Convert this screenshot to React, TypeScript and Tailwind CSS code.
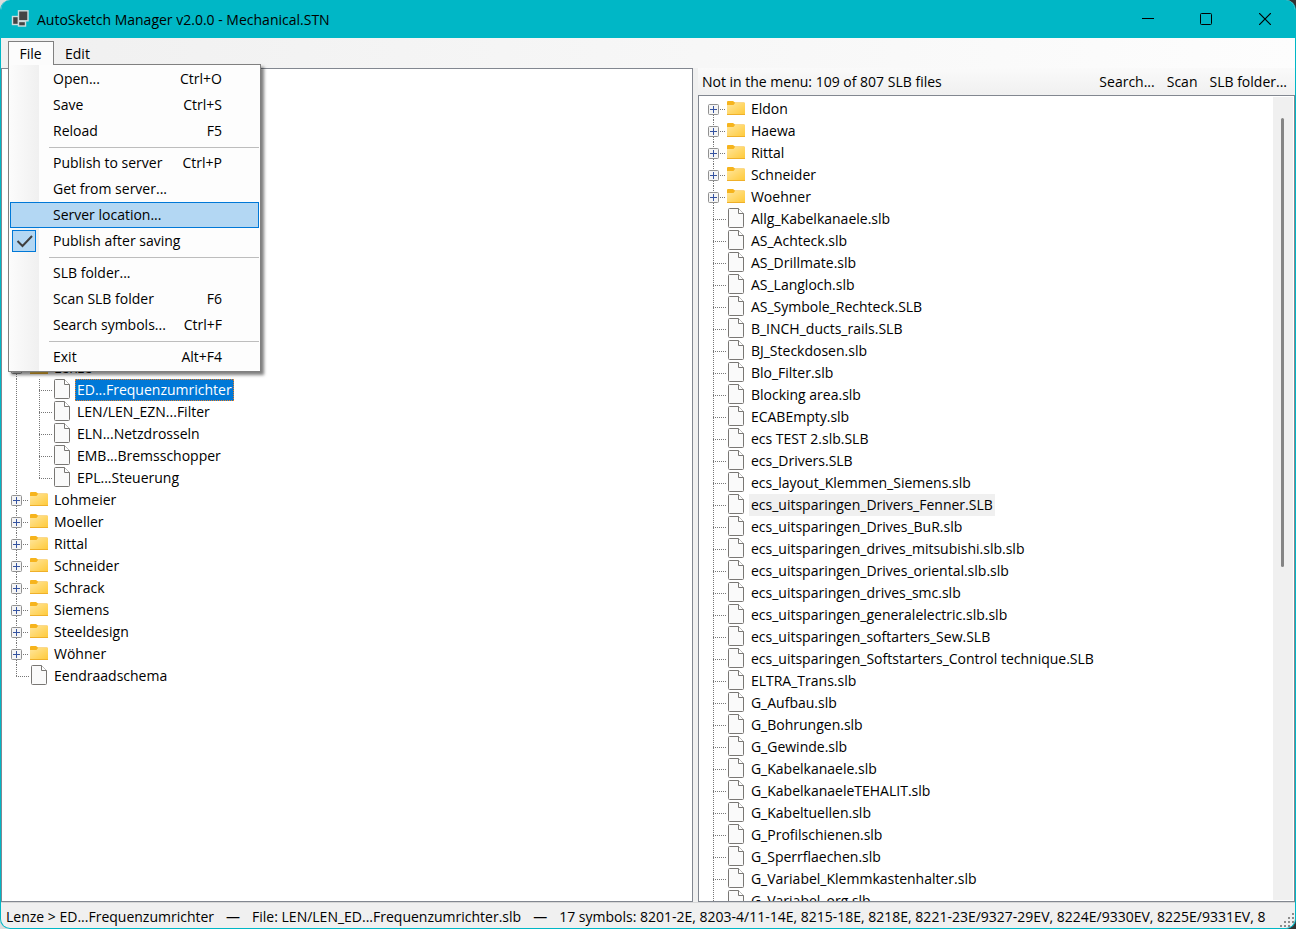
import { useState } from "react";

const slbFolders = ["Eldon", "Haewa", "Rittal", "Schneider", "Woehner"];

const slbFiles = [
  "Allg_Kabelkanaele.slb",
  "AS_Achteck.slb",
  "AS_Drillmate.slb",
  "AS_Langloch.slb",
  "AS_Symbole_Rechteck.SLB",
  "B_INCH_ducts_rails.SLB",
  "BJ_Steckdosen.slb",
  "Blo_Filter.slb",
  "Blocking area.slb",
  "ECABEmpty.slb",
  "ecs TEST 2.slb.SLB",
  "ecs_Drivers.SLB",
  "ecs_layout_Klemmen_Siemens.slb",
  "ecs_uitsparingen_Drivers_Fenner.SLB",
  "ecs_uitsparingen_Drives_BuR.slb",
  "ecs_uitsparingen_drives_mitsubishi.slb.slb",
  "ecs_uitsparingen_Drives_oriental.slb.slb",
  "ecs_uitsparingen_drives_smc.slb",
  "ecs_uitsparingen_generalelectric.slb.slb",
  "ecs_uitsparingen_softarters_Sew.SLB",
  "ecs_uitsparingen_Softstarters_Control technique.SLB",
  "ELTRA_Trans.slb",
  "G_Aufbau.slb",
  "G_Bohrungen.slb",
  "G_Gewinde.slb",
  "G_Kabelkanaele.slb",
  "G_KabelkanaeleTEHALIT.slb",
  "G_Kabeltuellen.slb",
  "G_Profilschienen.slb",
  "G_Sperrflaechen.slb",
  "G_Variabel_Klemmkastenhalter.slb",
  "G_Variabel_org.slb",
];

const lenzeFiles = [
  "ED...Frequenzumrichter",
  "LEN/LEN_EZN...Filter",
  "ELN...Netzdrosseln",
  "EMB...Bremsschopper",
  "EPL...Steuerung",
];

const menuFolders = [
  "Lohmeier",
  "Moeller",
  "Rittal",
  "Schneider",
  "Schrack",
  "Siemens",
  "Steeldesign",
  "Wöhner",
];

type MenuEntry = { label: string; keys?: string };

const fileMenu: MenuEntry[][] = [
  [
    { label: "Open...", keys: "Ctrl+O" },
    { label: "Save", keys: "Ctrl+S" },
    { label: "Reload", keys: "F5" },
  ],
  [
    { label: "Publish to server", keys: "Ctrl+P" },
    { label: "Get from server..." },
    { label: "Server location..." },
    { label: "Publish after saving" },
  ],
  [
    { label: "SLB folder..." },
    { label: "Scan SLB folder", keys: "F6" },
    { label: "Search symbols...", keys: "Ctrl+F" },
  ],
  [{ label: "Exit", keys: "Alt+F4" }],
];

function AppIcon() {
  return (
    <svg width="18" height="18" viewBox="0 0 18 18" className="shrink-0">
      <g fill="#444" stroke="#d0dcdd" strokeWidth="1.4">
        <rect x="1.5" y="6.5" width="6" height="8" />
        <rect x="7.5" y="11.5" width="7" height="4.5" />
        <rect x="7.5" y="0.8" width="9.5" height="10" />
      </g>
    </svg>
  );
}

function FolderIcon() {
  return (
    <svg width="18" height="16" viewBox="0 0 18 16" className="shrink-0">
      <defs>
        <linearGradient id="folder" x1="0" y1="0" x2="1" y2="1">
          <stop offset="0" stopColor="#ffe69c" />
          <stop offset="1" stopColor="#ffc937" />
        </linearGradient>
      </defs>
      <path d="M0 1Q0 0 1 0H6L8 1.5H17Q18 1.5 18 2.5V5H0Z" fill="#f6b41d" />
      <path d="M0 4H6.5L8 2H18V14H0Z" fill="url(#folder)" />
      <path d="M0 13.5H18" stroke="#efb02a" />
    </svg>
  );
}

function FileIcon() {
  return (
    <svg width="16" height="22" viewBox="0 0 16 22" className="shrink-0">
      <path
        d="M0.5 1.5Q0.5 0.5 1.5 0.5H10.5L15.5 5.5V18.5Q15.5 19.5 14.5 19.5H1.5Q0.5 19.5 0.5 18.5Z"
        fill="#fafafa"
        stroke="#797774"
      />
      <path d="M10.5 0.5V5.5H15.5" fill="#fff" stroke="#797774" />
    </svg>
  );
}

function Expander({ open }: { open?: boolean }) {
  return (
    <svg width="11" height="11" viewBox="0 0 11 11" className="shrink-0">
      <rect x="0.5" y="0.5" width="10" height="10" rx="1" fill="#f5f5f5" stroke="#919191" />
      <path d={open ? "M2 5.5H9" : "M2 5.5H9M5.5 2V9"} stroke="#3553a0" />
    </svg>
  );
}

// Dotted guide lines in front of a row; "last" stops the vertical one half way.
function Branch({ last }: { last?: boolean }) {
  return (
    <svg width="13" height="22" className="shrink-0">
      <path d={last ? "M0.5 0V12" : "M0.5 0V22"} stroke="#777" strokeDasharray="1 1" />
      <path d="M0 11.5H13" stroke="#777" strokeDasharray="1 1" />
    </svg>
  );
}

function FolderRow({ name, open, first }: { name: string; open?: boolean; first?: boolean }) {
  return (
    <li className="flex h-[22px] items-center pl-[9px]">
      <button
        aria-label={`Expand ${name}`}
        className="flex h-[22px] w-[11px] flex-col items-center"
      >
        <svg width="1" height="6" className="shrink-0">
          {!first && <path d="M0.5 0V6" stroke="#777" strokeDasharray="1 1" />}
        </svg>
        <Expander open={open} />
        <svg width="1" height="5" className="shrink-0">
          <path d="M0.5 0V5" stroke="#777" strokeDasharray="1 1" />
        </svg>
      </button>
      <svg width="8" height="22" className="shrink-0">
        <path d="M1 11.5H6" stroke="#777" strokeDasharray="1 1" />
      </svg>
      <FolderIcon />
      <span className="ml-1 px-[2px]">{name}</span>
    </li>
  );
}

function FileRow({ name, last, mark }: { name: string; last?: boolean; mark?: string }) {
  return (
    <li className="flex h-[22px] items-center pl-[14px]">
      <Branch last={last} />
      <span className="ml-[2px] flex">
        <FileIcon />
      </span>
      <span className={`ml-[5px] px-[2px] leading-[22px] ${mark ?? ""}`}>{name}</span>
    </li>
  );
}

function FileMenu() {
  const [publish, setPublish] = useState(true);

  return (
    <div className="absolute top-full left-0 z-10 -mt-px w-[253px] border border-[#808080] bg-[linear-gradient(to_right,#fcfcfc,#f0f0f0_30px,#fdfdfd_30px)] py-px shadow-[3px_3px_3px_rgba(0,0,0,0.5)]">
      {fileMenu.map((group, i) => (
        <div key={i}>
          {i > 0 && <hr className="mt-[3px] mr-px mb-px ml-10 h-[2px] border-0 border-t border-[#bdbdbd]" />}
          {group.map(({ label, keys }) =>
            label === "Publish after saving" ? (
              <label key={label} className="relative flex h-[26px] items-center pl-11">
                <input
                  type="checkbox"
                  checked={publish}
                  onChange={() => setPublish(!publish)}
                  className="absolute left-[3px] h-[22px] w-6 appearance-none border border-[#0078d7] bg-[#b3d7f3]"
                />
                {publish && (
                  <svg
                    width="18"
                    height="14"
                    viewBox="0 0 18 14"
                    className="pointer-events-none absolute left-[7px]"
                  >
                    <path d="M1.5 7L6.5 12L16 2" fill="none" stroke="#404040" strokeWidth="2" />
                  </svg>
                )}
                {label}
              </label>
            ) : (
              <button
                key={label}
                className={`mx-px flex h-[26px] w-[249px] items-center justify-between border pr-9 pl-[42px] ${
                  label === "Server location..."
                    ? "border-[#0078d7] bg-[#b3d7f3]"
                    : "border-transparent"
                }`}
              >
                <span>{label}</span>
                <span>{keys}</span>
              </button>
            )
          )}
        </div>
      ))}
    </div>
  );
}

function TitleBar() {
  return (
    <header className="flex h-[38px] shrink-0 items-center bg-[#00b7c6] pl-[10px]">
      <AppIcon />
      <h1 className="ml-2 flex-1 pt-px">AutoSketch Manager v2.0.0 - Mechanical.STN</h1>
      <button aria-label="Minimize" className="flex h-full w-[58px] items-center justify-center">
        <svg width="12" height="12" stroke="#000">
          <path d="M0 5.5H12" />
        </svg>
      </button>
      <button aria-label="Maximize" className="flex h-full w-[58px] items-center justify-center">
        <svg width="12" height="12" fill="none" stroke="#000">
          <rect x="0.5" y="0.5" width="11" height="11" rx="1" />
        </svg>
      </button>
      <button aria-label="Close" className="flex h-full w-[60px] items-center justify-center">
        <svg width="12" height="12" stroke="#000" strokeWidth="1.2">
          <path d="M0 0L12 12M12 0L0 12" />
        </svg>
      </button>
    </header>
  );
}

export default function App() {
  return (
    <div className="h-screen bg-linear-to-r from-[#ddd] to-[#333]">
      <div className="flex h-full flex-col overflow-hidden rounded-[10px] border-x border-b border-[#00b7c6] bg-[#f0f0f0] font-['Open_Sans','Noto_Sans',sans-serif] text-[14px] leading-5 whitespace-nowrap text-black">
        <TitleBar />

        <nav className="flex h-[30px] shrink-0 bg-linear-to-r from-[#f0f0f0] to-[#fdfdfd] pt-[3px] pl-[7px]">
          <div className="relative h-6">
            <button className="relative z-20 h-6 w-[46px] border border-b-0 border-[#808080] bg-[#fcfcfc] pr-px">
              File
            </button>
            <FileMenu />
          </div>
          <button className="h-6 px-[11px] pt-px">Edit</button>
        </nav>

        <main className="flex min-h-0 flex-1 gap-[5px]">
          <section className="flex-[691] overflow-hidden border border-[#828790] bg-white">
            <ul className="pt-[288px]">
              <FolderRow name="Lenze" open />
              {lenzeFiles.map((name, i) => (
                <li key={name} className="flex pl-[14px]">
                  <svg width="9" height="22" className="shrink-0">
                    <path d="M0.5 0V22" stroke="#777" strokeDasharray="1 1" />
                  </svg>
                  <ul>
                    <FileRow
                      name={name}
                      last={i === lenzeFiles.length - 1}
                      mark={
                        i === 0
                          ? "bg-[#0078d7] text-white outline-1 -outline-offset-1 outline-dotted outline-[#f08020]"
                          : undefined
                      }
                    />
                  </ul>
                </li>
              ))}
              {menuFolders.map((name) => (
                <FolderRow key={name} name={name} />
              ))}
              <FileRow name="Eendraadschema" last />
            </ul>
          </section>

          <section className="flex min-w-0 flex-[598] flex-col">
            <div className="flex h-[27px] shrink-0 items-center bg-linear-to-b from-[#fafafa] to-[#f0f0f0] pr-2 pl-1">
              <span className="flex-1">Not in the menu: 109 of 807 SLB files</span>
              <div className="flex gap-3">
                <button>Search...</button>
                <button>Scan</button>
                <button>SLB folder...</button>
              </div>
            </div>
            <div className="flex min-h-0 flex-1 border border-[#828790] bg-white">
              <ul className="min-w-0 flex-1 overflow-hidden pt-[2px]">
                {slbFolders.map((name, i) => (
                  <FolderRow key={name} name={name} first={i === 0} />
                ))}
                {slbFiles.map((name) => (
                  <FileRow
                    key={name}
                    name={name}
                    mark={name.includes("Fenner") ? "bg-[#f0f0f0]" : undefined}
                  />
                ))}
              </ul>
              <div className="my-px mr-px w-5 bg-[#f0f0f0] pt-[21px] pr-[2px]">
                <div className="mx-auto h-[449px] w-[3px] rounded-full bg-[#858585]" />
              </div>
            </div>
          </section>
        </main>

        <footer className="flex h-[26px] shrink-0 items-center gap-3 border-t border-[#d7d7d7] pl-[5px]">
          <p className="flex flex-1 gap-3 pt-[2px]">
            <span>Lenze &gt; ED...Frequenzumrichter</span>
            <span>—</span>
            <span>File: LEN/LEN_ED...Frequenzumrichter.slb</span>
            <span>—</span>
            <span>
              17 symbols: 8201-2E, 8203-4/11-14E, 8215-18E, 8218E, 8221-23E/9327-29EV, 8224E/9330EV,
              8225E/9331EV, 8
            </span>
          </p>
          <svg width="15" height="15" fill="#8c8c8c" className="shrink-0 self-end">
            <path d="M12 0h2v2h-2zM8 4h2v2h-2zM12 4h2v2h-2zM4 8h2v2h-2zM8 8h2v2h-2zM12 8h2v2h-2zM0 12h2v2h-2zM4 12h2v2h-2zM8 12h2v2h-2z" />
          </svg>
        </footer>
      </div>
    </div>
  );
}
